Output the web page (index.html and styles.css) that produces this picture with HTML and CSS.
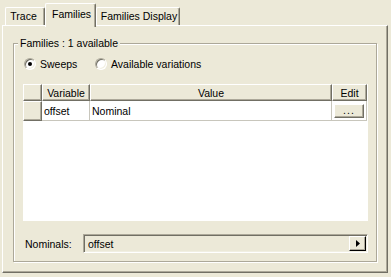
FILE: index.html
```html
<!DOCTYPE html>
<html>
<head>
<meta charset="utf-8">
<link rel="stylesheet" href="styles.css">
</head>
<body>
<div class="window">
  <div class="tabs">
    <div class="tab tab-trace">Trace</div>
    <div class="tab tab-active">Families</div>
    <div class="tab tab-display">Families Display</div>
  </div>
  <div class="panel">
    <fieldset class="group">
      <legend class="group-title">Families : 1 available</legend>
      <div class="radios">
        <label class="radio radio-first"><span class="radio-box"><span class="radio-dot"></span></span><span>Sweeps</span></label>
        <label class="radio"><span class="radio-box"></span><span>Available variations</span></label>
      </div>
      <div class="grid">
        <table class="grid-table">
          <colgroup>
            <col class="c-rh"><col class="c-var"><col class="c-val"><col class="c-edit">
          </colgroup>
          <thead>
            <tr>
              <th class="hdr"></th>
              <th class="hdr">Variable</th>
              <th class="hdr">Value</th>
              <th class="hdr">Edit</th>
            </tr>
          </thead>
          <tbody>
            <tr>
              <td class="hdr"></td>
              <td class="cell">offset</td>
              <td class="cell">Nominal</td>
              <td class="cell cell-edit"><span class="dots-btn">...</span></td>
            </tr>
          </tbody>
        </table>
      </div>
      <div class="nominals">
        <span class="nom-label">Nominals:</span>
        <div class="combo">
          <span class="combo-text">offset</span>
          <span class="combo-btn"><svg width="4" height="7" viewBox="0 0 4 7"><polygon points="0,0 4,3.5 0,7" fill="#000"/></svg></span>
        </div>
      </div>
    </fieldset>
  </div>
</div>
</body>
</html>
```

FILE: styles.css
```css
* { box-sizing: border-box; }
html, body { margin: 0; padding: 0; }
body {
  background: #ECE9D8;
  font-family: "Liberation Sans", Arial, sans-serif;
  font-size: 10.5px;
  color: #000;
  width: 391px;
  height: 277px;
  overflow: hidden;
}
.window { padding: 3px 3px 0 2px; }

.tabs {
  display: flex;
  align-items: flex-end;
  height: 22px;
  padding-left: 3px;
}
.tab {
  height: 18px;
  line-height: 17px;
  text-align: center;
  border-top: 1px solid #fff;
  border-left: 1px solid #fff;
  border-right: 1px solid #716F64;
  box-shadow: inset -1px 0 0 #ACA899;
  border-radius: 2px 2px 0 0;
  white-space: nowrap;
}
.tab-trace { width: 40px; padding-right: 3px; }
.tab-display { width: 84px; padding-left: 2px; }
.tab-active {
  width: 51px;
  height: 24px;
  margin-bottom: -2px;
  line-height: 20px;
  position: relative;
  z-index: 1;
  background: #ECE9D8;
  padding-left: 1px;
  text-align: left;
  padding-left: 6px;
}

.panel {
  width: 386px;
  height: 248px;
  border-top: 1px solid #fff;
  border-left: 1px solid #fff;
  border-right: 1px solid #716F64;
  border-bottom: 1px solid #716F64;
  box-shadow: inset -1px -1px 0 #ACA899;
  padding-top: 11px;
}

.group {
  margin: 0 10px;
  height: 225px;
  padding: 0 8px 8px 9px;
  border: 1px solid #ACA899;
  box-shadow: inset 1px 1px 0 #fff, 1px 1px 0 #fff;
  min-width: 0;
}
.group-title {
  line-height: 13px;
  padding: 0 2px;
  margin-left: -5px;
  background: #ECE9D8;
}

.radios {
  display: flex;
  align-items: center;
  height: 13px;
  margin-top: 7px;
}
.radio {
  display: flex;
  align-items: center;
  gap: 4px;
}
.radio-first { width: 72px; padding-left: 1px; }
.radio-box {
  width: 12px;
  height: 12px;
  border-radius: 50%;
  border: 1px solid;
  border-color: #ACA899 #fff #fff #ACA899;
  background: #fff;
  box-shadow: inset 1px 1px 0 #716F64, inset -1px -1px 0 #F1EFE2;
  display: flex;
  align-items: center;
  justify-content: center;
}
.radio-dot {
  width: 4px;
  height: 4px;
  border-radius: 50%;
  background: #000;
}

.grid {
  margin-top: 14px;
  height: 137px;
  background: #fff;
}
.grid-table {
  width: 344px;
  table-layout: fixed;
  border-collapse: separate;
  border-spacing: 0;
}
.c-rh { width: 19px; }
.c-var { width: 48px; }
.c-val { width: 242px; }
.c-edit { width: 35px; }
.hdr {
  height: 17px;
  padding: 0;
  font-weight: normal;
  text-align: center;
  background: #ECE9D8;
  border-top: 1px solid #fff;
  border-left: 1px solid #fff;
  border-right: 1px solid #716F64;
  border-bottom: 1px solid #716F64;
  box-shadow: inset -1px -1px 0 #ACA899;
}
tbody .hdr { height: 20px; }
.cell {
  height: 20px;
  padding: 0 0 0 2px;
  border-right: 1px solid #C8C6BC;
  border-bottom: 1px solid #C8C6BC;
  white-space: nowrap;
}
.cell-edit { padding: 0; text-align: center; }
.dots-btn {
  display: inline-block;
  width: 30px;
  height: 14px;
  line-height: 11px;
  vertical-align: middle;
  background: #ECE9D8;
  border: 1px solid;
  border-color: #fff #716F64 #716F64 #fff;
  box-shadow: inset -1px -1px 0 #ACA899;
  text-align: center;
  letter-spacing: 1px;
}

.nominals {
  display: flex;
  align-items: center;
  margin-top: 13px;
  height: 19px;
}
.nom-label { width: 60px; padding-left: 2px; }
.combo {
  flex: 1;
  height: 19px;
  display: flex;
  align-items: center;
  border: 1px solid;
  border-color: #ACA899 #fff #fff #ACA899;
  box-shadow: inset 1px 1px 0 #716F64, inset -1px -1px 0 #F1EFE2;
  padding-left: 4px;
}
.combo-text { flex: 1; }
.combo-btn {
  width: 17px;
  height: 15px;
  margin-right: 1px;
  display: flex;
  align-items: center;
  justify-content: center;
  background: #ECE9D8;
  border: 1px solid;
  border-color: #fff #000 #000 #fff;
  box-shadow: inset -1px -1px 0 #ACA899;
}
.combo-btn svg { display: block; margin-left: 1px; }
```
